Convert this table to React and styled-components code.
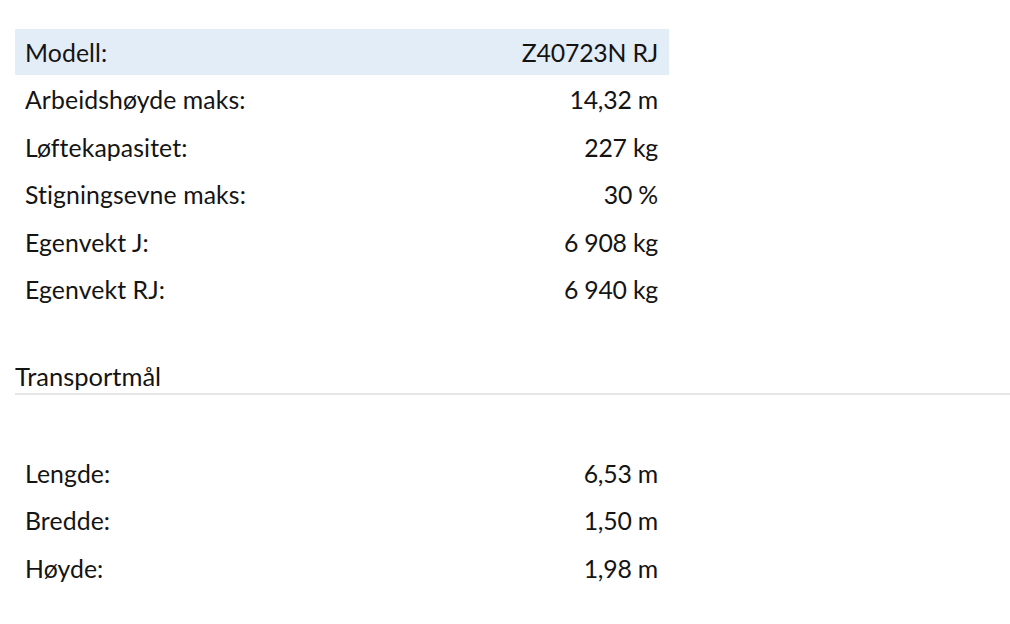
import React from "react";
import styled, { createGlobalStyle } from "styled-components";

const GlobalStyle = createGlobalStyle`
  html, body { margin: 0; padding: 0; background: #ffffff; }
  body { font-family: "Lato", "Open Sans", sans-serif; color: #141414; }
`;

const Page = styled.div`
  padding: 29px 0 0 15px;
`;

const SpecTable = styled.div`
  width: 654px;
  display: flex;
  flex-direction: column;
  gap: 1.5px;
`;

const SpecRow = styled.div`
  height: 46px;
  display: flex;
  align-items: center;
  justify-content: space-between;
  padding: 0 11px 0 10px;
  box-sizing: border-box;
  background: ${(p) => (p.$highlight ? "#e3edf7" : "transparent")};
  font-size: 24.8px;
  letter-spacing: 0.1px;
`;

const Label = styled.span``;
const Value = styled.span`
  text-align: right;
  letter-spacing: -0.2px;
`;

const SectionHeading = styled.h2`
  margin: 48.5px 0 0 0;
  padding: 0 0 2px 0;
  font-size: 25.5px;
  font-weight: 400;
  line-height: 30px;
  border-bottom: 2px solid #e6e6e6;
`;

const TransportTable = styled(SpecTable)`
  margin-top: 55px;
`;

const specs = [
  ["Modell:", "Z40723N RJ"],
  ["Arbeidshøyde maks:", "14,32 m"],
  ["Løftekapasitet:", "227 kg"],
  ["Stigningsevne maks:", "30 %"],
  ["Egenvekt J:", "6 908 kg"],
  ["Egenvekt RJ:", "6 940 kg"],
];

const transport = [
  ["Lengde:", "6,53 m"],
  ["Bredde:", "1,50 m"],
  ["Høyde:", "1,98 m"],
];

export default function App() {
  return (
    <Page>
      <GlobalStyle />
      <SpecTable>
        {specs.map(([l, v], i) => (
          <SpecRow key={l} $highlight={i === 0}>
            <Label>{l}</Label>
            <Value>{v}</Value>
          </SpecRow>
        ))}
      </SpecTable>
      <SectionHeading>Transportmål</SectionHeading>
      <TransportTable>
        {transport.map(([l, v]) => (
          <SpecRow key={l}>
            <Label>{l}</Label>
            <Value>{v}</Value>
          </SpecRow>
        ))}
      </TransportTable>
    </Page>
  );
}
